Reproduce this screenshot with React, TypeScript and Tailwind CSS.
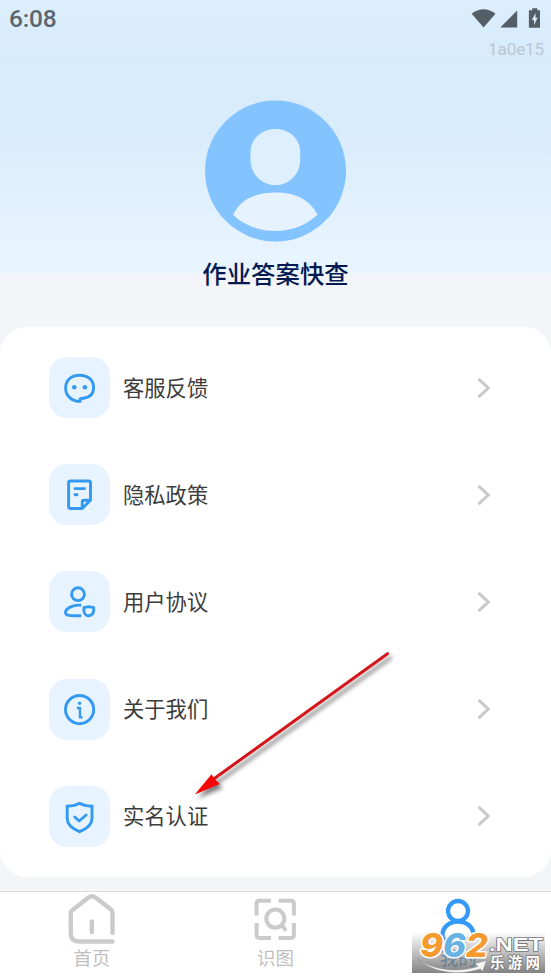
import type { ReactNode } from "react";

type Item = { label: string; icon: ReactNode };

const line = {
  fill: "none",
  stroke: "#3499f0",
  strokeWidth: 2.9,
  strokeLinecap: "round" as const,
  strokeLinejoin: "round" as const,
};

// Every menu glyph shares the 61px coordinate space of its tile.
const items: Item[] = [
  {
    label: "客服反馈",
    icon: (
      <>
        <path {...line} d="M31.2 44.4C22 44.4 16.6 38 16.6 31.2C16.6 23.2 22 18.2 30.6 18.2S44.6 23.2 44.6 30.6C44.6 37.4 39.8 41.4 31.2 41.6Z" />
        <circle cx="25.3" cy="30.2" r="2.3" fill="#3499f0" />
        <circle cx="35.9" cy="30.2" r="2.3" fill="#3499f0" />
      </>
    ),
  },
  {
    label: "隐私政策",
    icon: (
      <>
        <path {...line} d="M33.2 44.5H21.5Q19.6 44.5 19.6 42.6V18.8Q19.6 17 21.5 17H39.6Q41.5 17 41.5 18.8V36.2L33.2 44.5V38Q33.2 36.2 35 36.2H41.5" />
        <path {...line} d="M26 24.6H35.5M26 30.8H28" />
      </>
    ),
  },
  {
    label: "用户协议",
    icon: (
      <>
        <circle {...line} cx="29" cy="23.2" r="6.4" />
        <path {...line} strokeLinecap="butt" d="M32.2 34.3C23.5 33.4 16.5 37.8 16.5 41.4C16.5 44.8 20.5 44.8 32.2 44.8" />
        <path {...line} d="M39.7 35.6L44.7 36.7V39.2C44.7 42.4 42.3 44.8 39.7 44.8S34.9 42.4 34.9 39.2V36.7Z" />
      </>
    ),
  },
  {
    label: "关于我们",
    icon: (
      <>
        <circle {...line} cx="30.6" cy="30.6" r="14.1" />
        <circle cx="30.6" cy="24.2" r="1.7" fill="#3499f0" />
        <path {...line} strokeWidth="2.4" strokeLinecap="butt" d="M27.8 29H31V38.4H33.6" />
      </>
    ),
  },
  {
    label: "实名认证",
    icon: (
      <>
        <path {...line} strokeLinejoin="miter" d="M30.6 17.3C34.5 19.5 38.2 20 43 20.2V32.5C43 38.5 38.2 42.6 30.6 45.7C23 42.6 18.2 38.5 18.2 32.5V20.2C23 20 26.7 19.5 30.6 17.3Z" />
        <path {...line} d="M25.8 31L30.2 35L37.1 29" />
      </>
    ),
  },
];

function StatusBar() {
  return (
    <div className="flex h-[38px] items-center justify-between pl-[9px] pr-[10px] font-[Roboto,sans-serif] text-[#5b666e]">
      <span className="text-[24.5px] font-medium leading-none tracking-[-0.2px]">6:08</span>
      <svg width="70" height="24" viewBox="0 0 70 24" fill="#535e66">
        <path d="M0.7 6.8C7.5 0.6 17.5 0.6 24.5 6.8L12.6 20.6Z" />
        <path d="M46.2 3.5V20.5H29.3Z" />
        <path d="M61.3 1.3H66.3V3.3H69V20.7H57.9V3.3H61.3Z" />
        <path d="M64.5 6L60.9 13H63V18L66.6 10.8H64.5Z" fill="#dcedfb" />
      </svg>
    </div>
  );
}

function Avatar() {
  return (
    <svg width="142" height="142" viewBox="0 0 142 142">
      <circle cx="70.5" cy="71" r="70.5" fill="#83c3ff" />
      <path fill="#deeffd" d="M70.5 28.9C84.5 28.9 95.2 38.8 95.2 52V60C95.2 73.5 84.5 85.2 70.5 85.2S45.5 73.5 45.5 60V52C45.5 38.8 56.5 28.9 70.5 28.9Z" />
      <path fill="#e6f3fe" d="M28 114.8C35.5 99.5 50.5 92.6 70.5 92.6S104.5 99.5 112.5 114.8C89.5 136.5 50.5 136.5 28 114.8Z" />
    </svg>
  );
}

function Watermark() {
  return (
    <div className="absolute left-[412px] top-[40px] h-[41px] w-[133px] bg-linear-to-b from-[#99999900] via-[#8a8a8a88] to-[#707070dd]">
      <svg className="absolute left-0 top-0 overflow-visible" width="133" height="41" viewBox="0 0 133 41">
        <path d="M6 27.5C22 38 45 41 66 34.5L63 31.5L74.5 28.5L70.5 39.5L68.5 37C46 44 22 41 6 27.5Z" fill="#f5f5f5" stroke="#888" strokeWidth="0.5" />
        <g paintOrder="stroke" strokeLinejoin="round">
          <text x="8" y="24.5" fontFamily="Inter, sans-serif" fontWeight="800" fontSize="32.5" fontStyle="italic" textLength="68" lengthAdjust="spacingAndGlyphs" stroke="#fff" strokeWidth="3">
            <tspan fill="#f59a2e">9</tspan>
            <tspan fill="#68b3e3">6</tspan>
            <tspan fill="#f59a2e">2</tspan>
          </text>
          <text x="77" y="19" fontFamily="'Liberation Sans', sans-serif" fontWeight="700" fontSize="19" textLength="54" lengthAdjust="spacingAndGlyphs" fill="#fff" stroke="#777" strokeWidth="1.6">.NET</text>
          <text x="78" y="36" fontFamily="'Noto Sans CJK SC', sans-serif" fontWeight="700" fontSize="14.5" textLength="50" fill="#fff" stroke="#777" strokeWidth="1.6">乐游网</text>
        </g>
      </svg>
    </div>
  );
}

export default function App() {
  return (
    <div className="relative h-[979px] w-[551px] overflow-hidden bg-[#f4f5f8] font-['Noto_Sans_CJK_SC',sans-serif]">
      <header className="flex h-[327px] flex-col bg-[linear-gradient(180deg,#dceefc_0px,#d8ebfb_60px,#d9ecfc_130px,#e9f5fe_270px,#f4f5f8_278px)]">
        <StatusBar />
        <div className="h-[24px] pr-[7px] text-right font-[Roboto,sans-serif] text-[17px] leading-[23px] tracking-[-0.1px] text-[#b9c8d4]">1a0e15</div>
        <div className="mt-[38px] flex flex-col items-center">
          <Avatar />
          <h1 className="mt-[13px] text-[24.4px] font-medium leading-[36px] text-[#051a53]">作业答案快查</h1>
        </div>
      </header>

      <main className="flex h-[550px] flex-col gap-[46.2px] rounded-[27px] bg-white pl-[49px] pr-[60px] pt-[30px]">
        {items.map((item) => (
          <div key={item.label} className="flex h-[61px] shrink-0 items-center">
            <svg className="rounded-[18px] bg-[#e7f4ff]" width="61" height="61" viewBox="0 0 61 61">
              {item.icon}
            </svg>
            <span className="ml-[13px] pb-[2px] text-[21.3px] leading-[30px] text-[#3c3c3c]">{item.label}</span>
            <svg className="ml-auto" width="14" height="22" viewBox="0 0 14 22" fill="none" stroke="#c9c9c9" strokeWidth="3">
              <path d="M1.5 1.8L11.3 11L1.5 20.2" />
            </svg>
          </div>
        ))}
      </main>

      <nav className="relative mt-[14px] grid h-[88px] grid-cols-3 border-t border-[#dcdde0] bg-white text-[18.5px] leading-[24px] text-[#bfbfbf]">
        <div className="flex flex-col items-center">
          <svg width="48" height="53" viewBox="0 0 48 53" fill="none" stroke="#cbcbcb" strokeWidth="4.4" strokeLinecap="round" strokeLinejoin="round">
            <path d="M44.5 41V20.5Q44.5 18.8 43 17.5L27.5 5.5Q24 3 20.5 5.5L4 18.5Q2.8 19.5 2.8 21V41.5Q2.8 49.5 11 49.5H44.5M23.8 29.5V40" />
          </svg>
          <span>首页</span>
        </div>
        <div className="flex flex-col items-center">
          <svg width="42" height="53" viewBox="0 0 42 53" fill="none" stroke="#cbcbcb" strokeWidth="4">
            <path d="M17 8.7H5.5Q2.6 8.7 2.6 11.6V23.5M24.5 8.7H37Q39.9 8.7 39.9 11.6V23.5M2.6 31V43Q2.6 45.9 5.5 45.9H17M24.5 45.9H37Q39.9 45.9 39.9 43V31" />
            <circle cx="21.3" cy="26.6" r="9" />
            <path strokeLinecap="round" d="M27.7 33L31 37.2" />
          </svg>
          <span>识图</span>
        </div>
        <div className="flex flex-col items-center pr-[2px] text-[#2e91dc]">
          <svg width="40" height="53" viewBox="0 0 40 53" fill="none" stroke="#3499f7" strokeWidth="4.3" strokeLinecap="round">
            <circle cx="20" cy="19" r="10" />
            <path d="M4.5 46V43C4.5 35 11.5 29.5 20 29.5S35.5 35 35.5 43V46Q35.5 47.5 34 47.5H6Q4.5 47.5 4.5 46" />
          </svg>
          <span>我的</span>
        </div>
        <Watermark />
      </nav>

      <svg className="pointer-events-none absolute left-[180px] top-[640px]" width="230" height="170" viewBox="0 0 230 170">
        <g className="drop-shadow-[3px_4px_2px_rgba(0,0,0,0.5)]">
          <path d="M207.5 13.7L34 138.7" stroke="#d4151b" strokeWidth="3" strokeLinecap="round" />
          <path d="M14.8 154.5L31.5 134.2L34.5 139L39.8 144Z" fill="#fa0505" />
        </g>
      </svg>
    </div>
  );
}
